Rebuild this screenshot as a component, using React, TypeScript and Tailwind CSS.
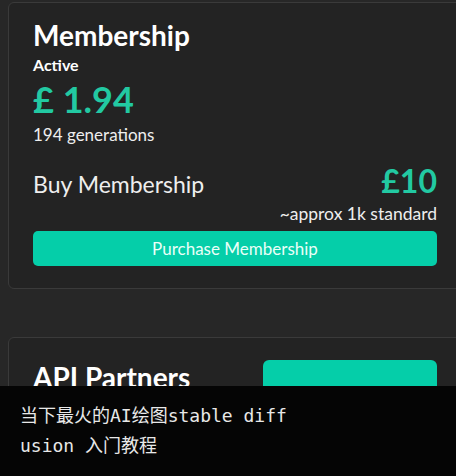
import React from 'react';

const teal = 'text-[#22c9a2]';

export default function App() {
  return (
    <div className="relative h-[476px] w-[456px] overflow-hidden bg-[#272727] pl-2 pt-[2px] font-['Lato','Noto_Sans',sans-serif] text-[#f2f2f2]">
      {/* Membership card */}
      <div className="w-[470px] rounded-[6px] border border-[#3a3a3a] bg-[#232323] px-6 pb-[22px] pt-4">
        <div className="w-[404px]">
          <h2 className="text-[28px] font-bold leading-[32px] text-white">Membership</h2>
          <div className="mt-1 text-[16px] font-bold leading-[20px] text-white">Active</div>
          <div className={`mt-1 text-[36px] font-bold leading-[40px] ${teal}`}>£ 1.94</div>
          <div className="mt-[6px] text-[17px] leading-[20px] text-[#eeeeee]">194 generations</div>

          <div className="mt-[18px] flex items-baseline justify-between">
            <span className="text-[23px] leading-[28px] text-[#eeeeee]">Buy Membership</span>
            <span className={`text-[32px] font-bold leading-[36px] ${teal}`}>£10</span>
          </div>
          <div className="mt-[5px] text-right text-[17.5px] leading-[20px] text-[#eeeeee]">~approx 1k standard</div>

          <button className="mt-[7px] flex h-[35px] w-full items-center justify-center rounded-[5px] bg-[#05cea9] text-[17px] text-[#eafff8]">
            Purchase Membership
          </button>
        </div>
      </div>

      {/* API Partners card */}
      <div className="mt-12 w-[470px] rounded-[6px] border border-[#3a3a3a] bg-[#232323] px-6 pt-[22px] pb-6">
        <div className="flex w-[404px] items-start justify-between">
          <h2 className="mt-px text-[28px] font-bold leading-[32px] text-white">API Partners</h2>
          <div className="h-[56px] w-[174px] rounded-[6px] bg-[#05cea9]" />
        </div>
      </div>

      {/* caption overlay */}
      <div className="absolute bottom-0 left-0 h-[90px] w-full bg-[#050505] px-5 pt-[15px] font-['DejaVu_Sans_Mono','Noto_Sans_CJK_SC',monospace] text-[18px] leading-[30px] text-[#e8e8e8]">
        <div>当下最火的AI绘图stable diff</div>
        <div>usion 入门教程</div>
      </div>
    </div>
  );
}
